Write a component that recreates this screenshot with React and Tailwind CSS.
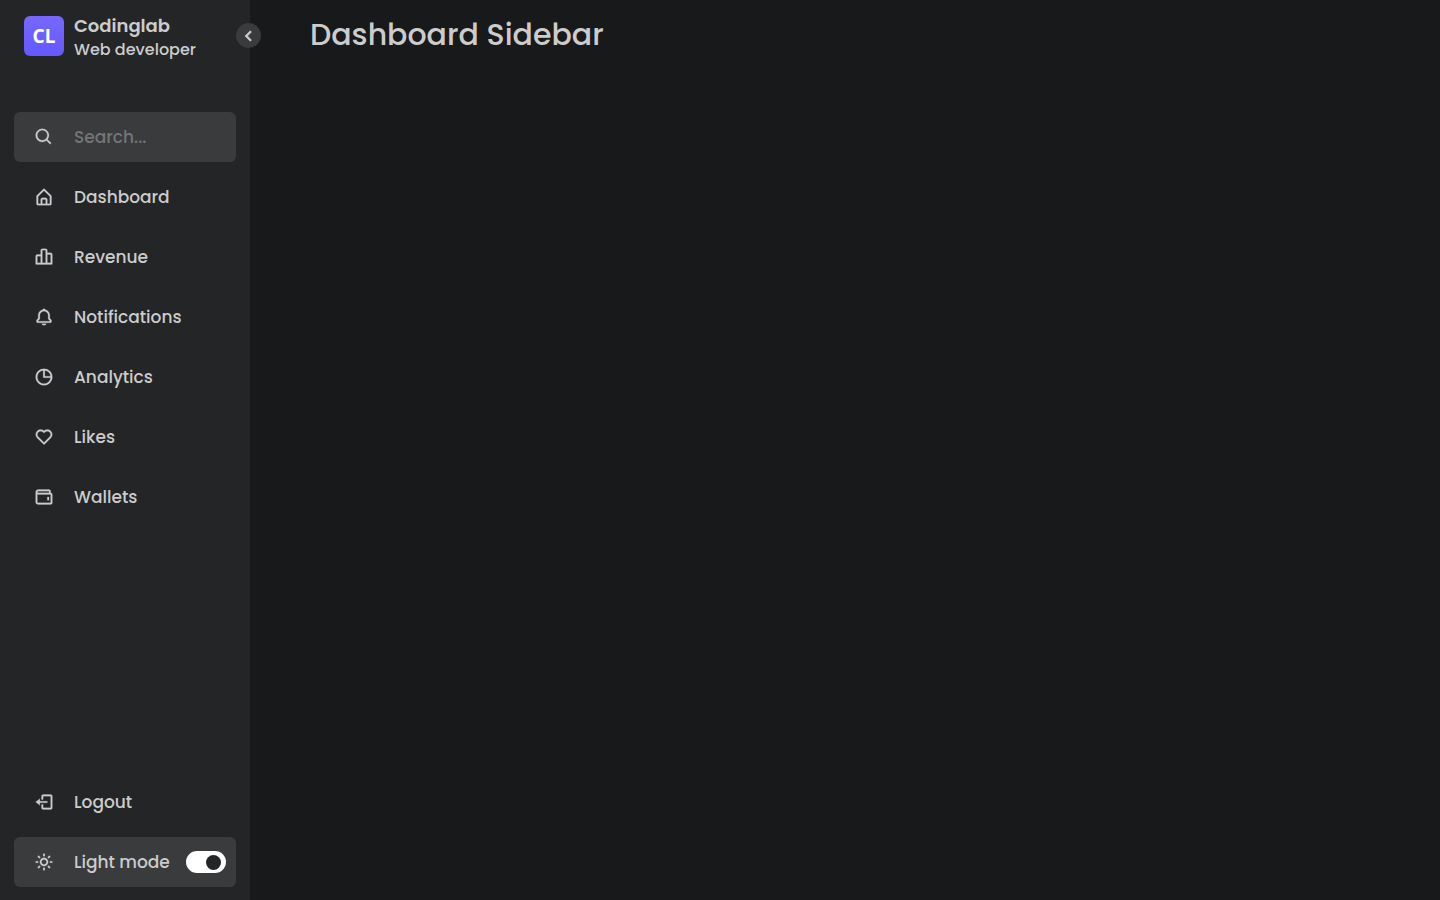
import { useState } from "react";
import {
  BiBarChartAlt2,
  BiBell,
  BiChevronLeft,
  BiHeart,
  BiHomeAlt,
  BiLogOut,
  BiPieChartAlt,
  BiSearch,
  BiSun,
  BiWallet,
} from "react-icons/bi";

const links = [
  { label: "Dashboard", Icon: BiHomeAlt },
  { label: "Revenue", Icon: BiBarChartAlt2 },
  { label: "Notifications", Icon: BiBell },
  { label: "Analytics", Icon: BiPieChartAlt },
  { label: "Likes", Icon: BiHeart },
  { label: "Wallets", Icon: BiWallet },
];

function IconSlot({ Icon }) {
  return (
    <span className="flex w-[60px] shrink-0 items-center justify-center">
      <Icon className="size-5" strokeWidth="0.25" aria-hidden="true" />
    </span>
  );
}

function NavLink({ label, Icon }) {
  return (
    <li>
      <a href="#" className="flex h-[50px] items-center rounded-md">
        <IconSlot Icon={Icon} />
        <span className="whitespace-nowrap">{label}</span>
      </a>
    </li>
  );
}

function Logo() {
  return (
    <svg viewBox="0 0 40 40" className="size-10" role="img" aria-label="Codinglab logo">
      <defs>
        <linearGradient id="logo-fill" x1="0" y1="0" x2="0" y2="1">
          <stop offset="0" stopColor="#7668fe" />
          <stop offset="1" stopColor="#6558fe" />
        </linearGradient>
      </defs>
      <rect width="40" height="40" rx="6" fill="url(#logo-fill)" />
      <text
        x="20"
        y="27"
        textAnchor="middle"
        fill="#fff"
        className="font-['Noto_Sans',sans-serif] text-[19px] font-bold"
      >
        CL
      </text>
    </svg>
  );
}

export default function App() {
  const [dark, setDark] = useState(true);
  return (
    <div className="flex min-h-screen bg-[#18191a] font-['Poppins','Inter',sans-serif] text-[17px] leading-[26px] font-medium text-[#cccccc]">
      <aside className="relative flex w-[250px] shrink-0 flex-col bg-[#242526] px-[14px] pt-3 pb-[13px]">
        <header className="flex h-12 items-center">
          <span className="flex w-[60px] shrink-0 justify-center">
            <Logo />
          </span>
          <div className="flex flex-col pt-1 whitespace-nowrap">
            <span className="text-lg leading-6 font-semibold">Codinglab</span>
            <span className="text-base leading-6">Web developer</span>
          </div>
        </header>
        <button
          type="button"
          aria-label="Collapse sidebar"
          className="absolute top-[23px] -right-[11px] flex size-[25px] items-center justify-center rounded-full bg-[#3a3b3c]"
        >
          <BiChevronLeft className="size-[22px]" strokeWidth="0.6" aria-hidden="true" />
        </button>

        <nav className="mt-[52px] flex flex-1 flex-col justify-between">
          <div className="flex flex-col gap-[10px]">
            <label className="flex h-[50px] items-center rounded-md bg-[#3a3b3c]">
              <IconSlot Icon={BiSearch} />
              <input
                type="search"
                aria-label="Search"
                placeholder="Search..."
                className="w-full min-w-0 bg-transparent outline-none placeholder:text-[#757575]"
              />
            </label>
            <ul className="flex flex-col gap-[10px]">
              {links.map((link) => (
                <NavLink key={link.label} {...link} />
              ))}
            </ul>
          </div>

          <ul className="flex flex-col gap-[10px]">
            <NavLink label="Logout" Icon={BiLogOut} />
            <li>
              <label className="flex h-[50px] items-center rounded-md bg-[#3a3b3c] pr-[10px]">
                <IconSlot Icon={BiSun} />
                <span className="flex-1 whitespace-nowrap">Light mode</span>
                <input
                  type="checkbox"
                  role="switch"
                  checked={dark}
                  onChange={() => setDark(!dark)}
                  className="flex h-[22px] w-10 shrink-0 cursor-pointer appearance-none items-center rounded-full bg-white px-[5px] before:size-[15px] before:rounded-full before:bg-[#242526] before:content-[''] checked:justify-end"
                />
              </label>
            </li>
          </ul>
        </nav>
      </aside>

      <main className="flex-1 px-[60px] py-3">
        <h1 className="text-[30px] leading-[45px] font-medium">Dashboard Sidebar</h1>
      </main>
    </div>
  );
}
